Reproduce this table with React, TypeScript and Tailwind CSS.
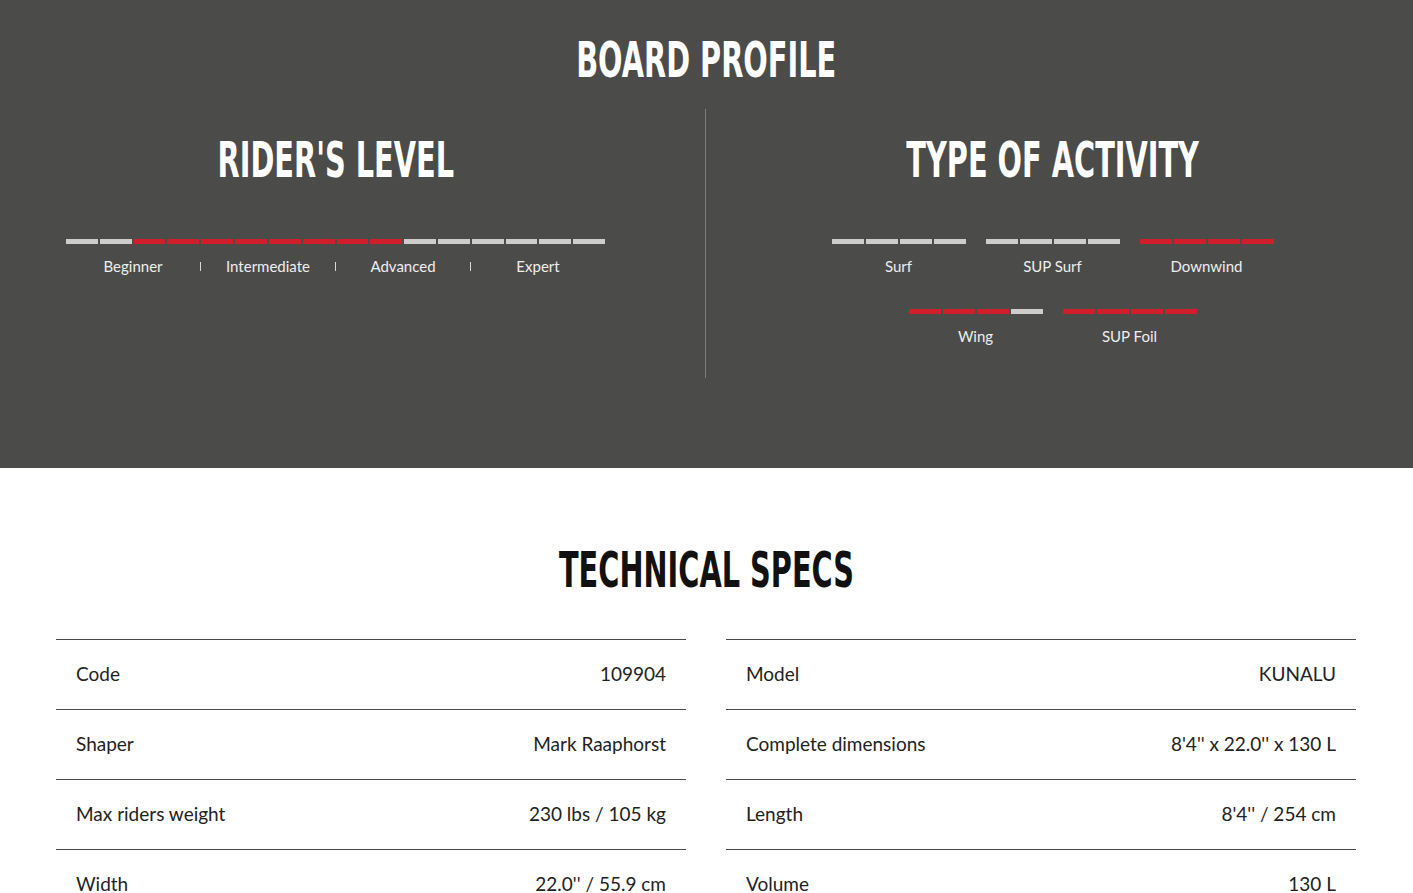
const heading =
  "font-['Liberation_Sans_Narrow','DejaVu_Sans_Condensed','Liberation_Sans',sans-serif] font-bold leading-none text-[50px] inline-block scale-x-[0.64]";
const body = "font-['Lato','Open_Sans',sans-serif]";

const RED = "bg-[#d01f2b]";
const GRAY = "bg-[#cdcdcd]";

const Segments = ({ filled, total = 4, from = 0 }: { filled: number; total?: number; from?: number }) => (
  <div className="flex gap-[2px]">
    {Array.from({ length: total }).map((_, i) => (
      <div
        key={i}
        className={`h-[5px] flex-1 ${i >= from && i < from + filled ? RED : GRAY}`}
      />
    ))}
  </div>
);

const levels = ["Beginner", "Intermediate", "Advanced", "Expert"];

const RidersLevel = () => (
  <div className="w-[539px]">
    {/* 16 segments, 2 beginner gray, 8 red, 6 gray */}
    <Segments total={16} filled={8} from={2} />
    <div className={`flex items-center mt-[12px] ${body} text-[15px] leading-5 text-[#eeeeee]`}>
      {levels.map((l, i) => (
        <div key={l} className="contents">
          {i > 0 && <span className="w-px h-[9px] bg-[#d8d8d8]" />}
          <span className="flex-1 text-center">{l}</span>
        </div>
      ))}
    </div>
  </div>
);

const activities = [
  { name: "Surf", filled: 0 },
  { name: "SUP Surf", filled: 0 },
  { name: "Downwind", filled: 4 },
  { name: "Wing", filled: 3 },
  { name: "SUP Foil", filled: 4 },
];

const Activity = () => (
  <div className="w-[442px] flex flex-wrap justify-center gap-x-[20px] gap-y-[33px]">
    {activities.map((a) => (
      <div key={a.name} className="w-[134px]">
        <Segments filled={a.filled} />
        <div className={`mt-[12px] text-center ${body} text-[15px] leading-5 text-[#eeeeee]`}>
          {a.name}
        </div>
      </div>
    ))}
  </div>
);

const left = [
  ["Code", "109904"],
  ["Shaper", "Mark Raaphorst"],
  ["Max riders weight", "230 lbs / 105 kg"],
  ["Width", "22.0'' / 55.9 cm"],
];
const right = [
  ["Model", "KUNALU"],
  ["Complete dimensions", "8'4'' x 22.0'' x 130 L"],
  ["Length", "8'4'' / 254 cm"],
  ["Volume", "130 L"],
];

const SpecTable = ({ rows }: { rows: string[][] }) => (
  <div className="border-t border-[#4a4a4a]">
    {rows.map(([k, v]) => (
      <div
        key={k}
        className={`h-[70px] border-b border-[#4a4a4a] flex items-center justify-between px-5 ${body} text-[19px] text-[#222222]`}
      >
        <span>{k}</span>
        <span>{v}</span>
      </div>
    ))}
  </div>
);

export default function App() {
  return (
    <div className="w-full min-h-screen bg-white">
      <section className="bg-[#4b4b49] pt-[35px] pb-[90px]">
        <div className="text-center text-white">
          <h2 className={heading}>BOARD PROFILE</h2>
        </div>
        <div className="flex mt-[24px]">
          <div className="w-[706px] h-[269px] border-r border-[#7c7c7a] pr-[34px] flex flex-col items-center pt-[26px]">
            <h3 className={`${heading} text-white`}>RIDER'S LEVEL</h3>
            <div className="mt-[54px]">
              <RidersLevel />
            </div>
          </div>
          <div className="flex-1 pr-[14px] flex flex-col items-center pt-[26px]">
            <h3 className={`${heading} text-white`}>TYPE OF ACTIVITY</h3>
            <div className="mt-[54px]">
              <Activity />
            </div>
          </div>
        </div>
      </section>
      <section className="pt-[77px] pb-10">
        <div className="text-center text-[#111111]">
          <h2 className={heading}>TECHNICAL SPECS</h2>
        </div>
        <div className="mt-[44px] w-[1300px] ml-[56px] grid grid-cols-2 gap-x-10">
          <SpecTable rows={left} />
          <SpecTable rows={right} />
        </div>
      </section>
    </div>
  );
}
